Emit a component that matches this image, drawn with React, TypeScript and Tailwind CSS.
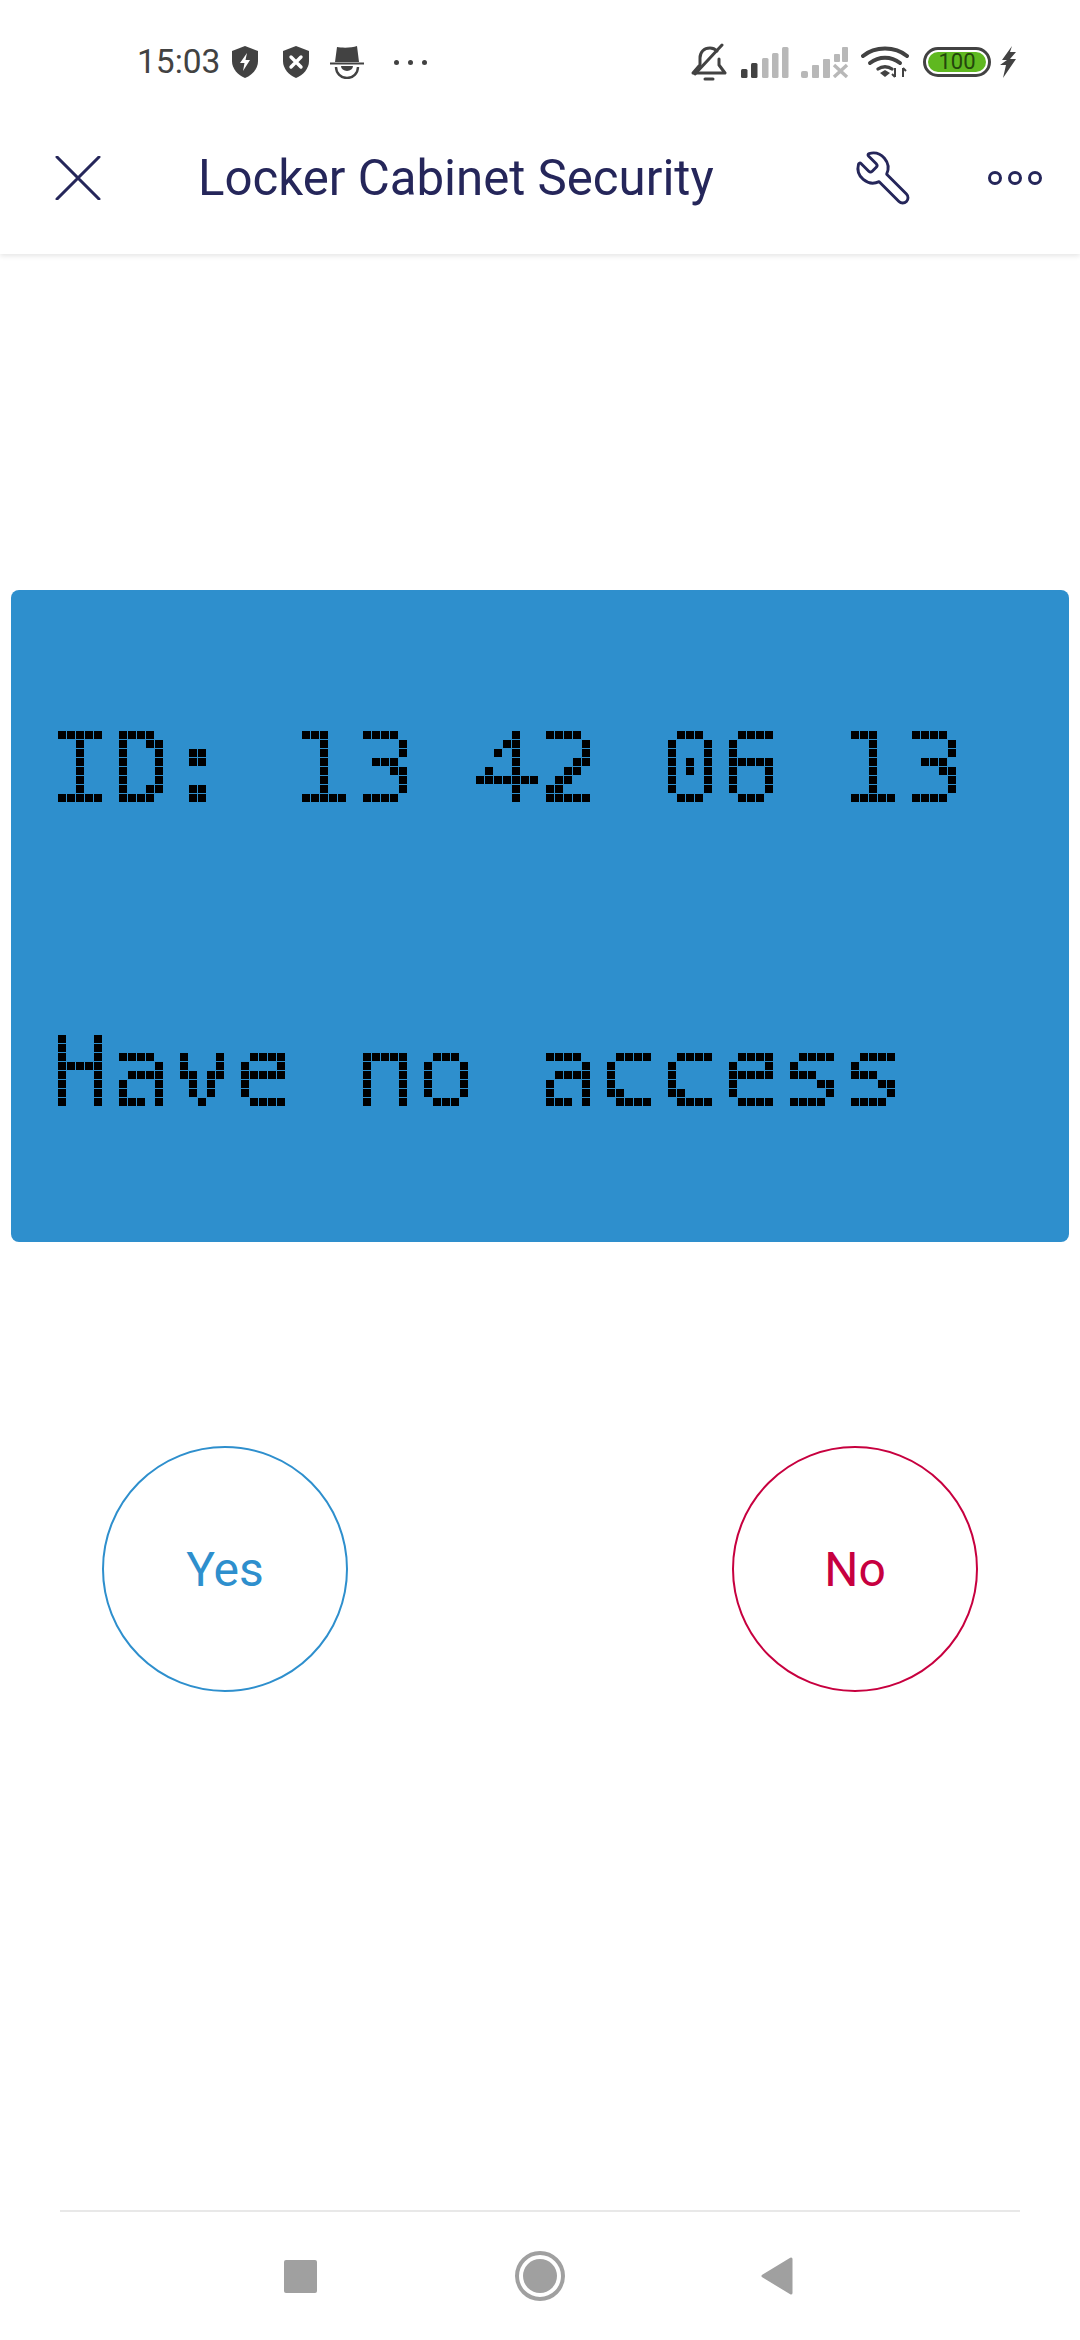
import { Wrench } from "lucide-react";

const line1 = "ID: 13 42 06 13".split("");
const line2 = "Have no access".split("");

function Shield({ x }: { x?: boolean }) {
  return (
    <svg width="28" height="32" viewBox="0 0 28 32">
      <path d="M14 0 L27 5 V15 C27 23 21 29 14 32 C7 29 1 23 1 15 V5 Z" fill="#424242" />
      {x ? (
        <path d="M9 11 L19 21 M19 11 L9 21" stroke="#fff" strokeWidth="3.4" strokeLinecap="round" />
      ) : (
        <path d="M16 7 L9 17 H13.5 L12 25 L19 14 H14.5 Z" fill="#fff" />
      )}
    </svg>
  );
}

function Spy() {
  return (
    <svg width="34" height="34" viewBox="0 0 34 34">
      <path d="M7 2 C12 3 22 3 27 1 L29 17 H5 Z" fill="#424242" />
      <path d="M0 18.5 H34" stroke="#424242" strokeWidth="2" />
      <path d="M6 22 A11 11 0 0 0 28 22" fill="none" stroke="#424242" strokeWidth="2.4" />
      <path d="M11 21 H23 A6 5 0 0 1 11 21 Z" fill="#424242" />
    </svg>
  );
}

function BellOff() {
  return (
    <svg width="36" height="38" viewBox="0 0 36 38" fill="none" stroke="#424242" strokeWidth="3" strokeLinecap="round" strokeLinejoin="round">
      <path d="M9 22 V15 C9 9 13 5 19 5 C22 5 24 6 26 8" />
      <path d="M28 16 V22 L34 30 H2 L8 23" />
      <path d="M4 31 L31 2" />
      <path d="M14 36 H22" />
    </svg>
  );
}

function Signal({ off }: { off?: boolean }) {
  const bars = [
    { x: 0, h: 9, fill: "#424242" },
    { x: 10, h: 15, fill: "#424242" },
    { x: 21, h: 20, fill: "#b8b8b8" },
    { x: 31, h: 25, fill: "#b8b8b8" },
    { x: 41, h: 31, fill: "#b8b8b8" },
  ];
  return (
    <svg width="48" height="32" viewBox="0 0 48 32">
      {off ? (
        <>
          <rect x="0" y="25" width="7" height="7" rx="2" fill="#b8b8b8" />
          <rect x="11" y="19" width="7" height="13" rx="1" fill="#b8b8b8" />
          <rect x="22" y="13" width="7" height="19" rx="1" fill="#b8b8b8" />
          <rect x="33" y="8" width="6" height="8" rx="1" fill="#b8b8b8" />
          <rect x="41" y="1" width="6" height="15" rx="1" fill="#b8b8b8" />
          <path d="M33 19 L46 31 M46 19 L33 31" stroke="#b8b8b8" strokeWidth="3.4" />
        </>
      ) : (
        bars.map((b) => (
          <rect key={b.x} x={b.x} y={32 - b.h} width="6.5" height={b.h} rx="1.5" fill={b.fill} />
        ))
      )}
    </svg>
  );
}

function Wifi() {
  return (
    <svg width="48" height="32" viewBox="0 0 48 32" fill="none" stroke="#424242" strokeWidth="4" strokeLinecap="round">
      <path d="M2 10 C14 0 34 0 46 10" />
      <path d="M9 17 C18 10 30 10 39 17" />
      <path d="M17 23 C21 20 27 20 31 23" strokeWidth="3.4" />
      <path d="M19 27 L24 24 L29 27 L24 31 Z" fill="#424242" stroke="none" />
      <path d="M34 22 V31 M34 31 L31 28 M42 31 V22 M42 22 L45 25" strokeWidth="2" strokeLinecap="butt" />
    </svg>
  );
}

function Battery() {
  return (
    <div className="flex h-[30px] w-[68px] items-center rounded-[15px] border-[3px] border-[#424242] p-[2px]">
      <div className="flex h-full w-full items-center justify-center rounded-[10px] bg-[#5fb820] text-[22px] leading-none text-[#24470c]">
        100
      </div>
    </div>
  );
}

// one character of the display: real text, sampled down to a 5x8 dot grid by the filter
function LcdChar({ ch }: { ch: string }) {
  return (
    <span className="mr-[16px] flex h-[72px] w-[45px] shrink-0 justify-center [filter:url(#lcd)]">
      <span
        className={`shrink-0 scale-x-[1.12] whitespace-pre font-['DejaVu_Sans_Mono',monospace] text-[97px] leading-[76px] text-black ${
          ch === ":" ? "font-bold" : "font-normal"
        }`}
      >
        {ch}
      </span>
    </span>
  );
}

export default function App() {
  return (
    <div className="flex h-[2340px] w-[1080px] flex-col overflow-hidden bg-white font-['Roboto',sans-serif]">
      <svg width="0" height="0" className="absolute">
        <filter id="lcd" x="0" y="0" width="100%" height="100%" colorInterpolationFilters="sRGB">
          <feFlood x="4" y="4" width="1" height="1" />
          <feComposite width="9" height="9" />
          <feTile result="samples" />
          <feComposite in="SourceGraphic" in2="samples" operator="in" />
          <feComponentTransfer>
            <feFuncA type="discrete" tableValues="0 1" />
          </feComponentTransfer>
          <feMorphology operator="dilate" radius="4" result="blocks" />
          <feFlood x="0" y="0" width="8" height="8" />
          <feComposite width="9" height="9" />
          <feTile result="dots" />
          <feComposite in="blocks" in2="dots" operator="in" />
        </filter>
      </svg>

      <header className="relative z-10 shrink-0 bg-white shadow-[0_2px_5px_rgba(0,0,0,0.1)]">
        <div className="flex h-[82px] items-center pl-[137px] pr-[63px] pt-[42px] text-[#424242]">
          <span className="text-[33.5px] leading-none">15:03</span>
          <span className="ml-[11px] flex"><Shield /></span>
          <span className="ml-[23px] flex"><Shield x /></span>
          <span className="ml-[20px] flex"><Spy /></span>
          <span className="ml-[30px] flex gap-[9px]">
            <i className="h-[5px] w-[5px] rounded-full bg-[#424242]" />
            <i className="h-[5px] w-[5px] rounded-full bg-[#424242]" />
            <i className="h-[5px] w-[5px] rounded-full bg-[#424242]" />
          </span>
          <span className="ml-auto flex"><BellOff /></span>
          <span className="ml-[14px] flex"><Signal /></span>
          <span className="ml-[12px] flex"><Signal off /></span>
          <span className="ml-[12px] flex"><Wifi /></span>
          <span className="ml-[14px] flex"><Battery /></span>
          <svg className="ml-[9px]" width="17" height="32" viewBox="0 0 17 32">
            <path d="M12 0 L2 14 H7 L0 19 H6 L3 32 L16 13 H10 L16 6 H10 Z" fill="#424242" />
          </svg>
        </div>
        <div className="flex h-[172px] items-center pl-[55px] pr-[38px] pt-[20px] text-[#25265a]">
          <svg width="46" height="44" viewBox="0 0 46 44" fill="none" stroke="#25265a" strokeWidth="3" strokeLinecap="round">
            <path d="M2 1 L44 43 M44 1 L2 43" />
          </svg>
          <h1 className="ml-[97px] mt-[2px] text-[49.2px] font-normal leading-none">Locker Cabinet Security</h1>
          <Wrench className="ml-auto -scale-x-100" size={60} strokeWidth={1.15} />
          <div className="ml-[75px] flex gap-[6px]">
            <i className="h-[14px] w-[14px] rounded-full border-[3px] border-[#25265a]" />
            <i className="h-[14px] w-[14px] rounded-full border-[3px] border-[#25265a]" />
            <i className="h-[14px] w-[14px] rounded-full border-[3px] border-[#25265a]" />
          </div>
        </div>
      </header>

      <main className="flex flex-1 flex-col">
        <section className="mx-[11px] mt-[336px] flex h-[652px] flex-col rounded-[8px] bg-[#2e8fcd] pl-[47px] pt-[141px]">
          <div className="flex">
            {line1.map((ch, i) => (
              <LcdChar key={i} ch={ch} />
            ))}
          </div>
          <div className="mt-[232px] flex">
            {line2.map((ch, i) => (
              <LcdChar key={i} ch={ch} />
            ))}
          </div>
        </section>

        <div className="mt-[204px] flex justify-between px-[102px]">
          <button className="flex h-[246px] w-[246px] items-center justify-center rounded-full border-2 border-[#2e8fcd] pt-[2px] text-[48px] text-[#2e8fcd]">
            Yes
          </button>
          <button className="flex h-[246px] w-[246px] items-center justify-center rounded-full border-2 border-[#c7003f] pt-[2px] text-[48px] text-[#c7003f]">
            No
          </button>
        </div>

        <nav className="mx-[60px] mt-auto flex h-[130px] items-center justify-between border-t-2 border-[#e8e8e8] pl-[224px] pr-[226px]">
          <div className="h-[33px] w-[33px] rounded-[2px] bg-[#a0a0a0]" />
          <div className="ml-[2px] flex h-[50px] w-[50px] items-center justify-center rounded-full border-[4px] border-[#a0a0a0]">
            <div className="h-[34px] w-[34px] rounded-full bg-[#a0a0a0]" />
          </div>
          <svg width="34" height="38" viewBox="0 0 34 38">
            <path d="M31 2 V36 L3 19 Z" fill="#a0a0a0" stroke="#a0a0a0" strokeWidth="3" strokeLinejoin="round" />
          </svg>
        </nav>
      </main>
    </div>
  );
}
